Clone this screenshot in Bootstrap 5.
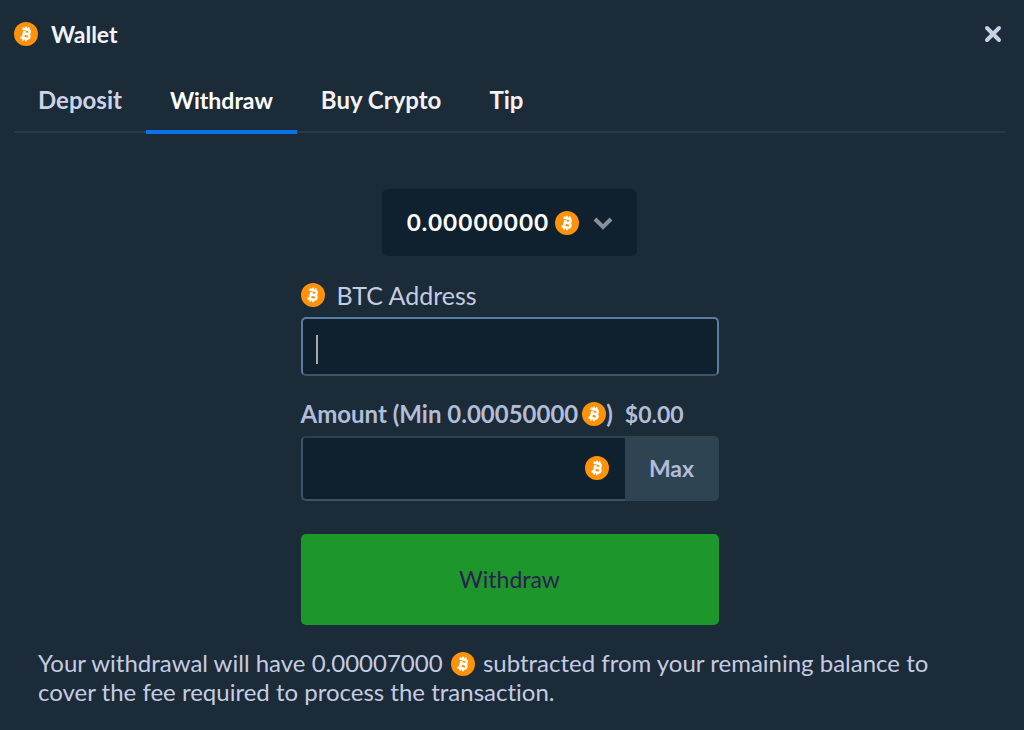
<!DOCTYPE html>
<html lang="en">
<head>
<meta charset="utf-8">
<meta name="viewport" content="width=device-width, initial-scale=1">
<title>Wallet</title>
<link href="https://cdn.jsdelivr.net/npm/bootstrap@5.3.0/dist/css/bootstrap.min.css" rel="stylesheet">
<style>
  body { background: #1b2b37; color: #c5cbe3; font-family: Lato, "Open Sans", sans-serif; font-size: 24px; line-height: 28px; font-variant-ligatures: none; }
  .wallet { padding: 20px 19px 20px 14px; }
  .coin { width: 24px; height: 24px; flex: none; }
  .wallet-title { font-size: 23px; line-height: 26px; color: #f1f3fb; gap: 13px; }
  .close-btn { width: 24px; height: 28px; line-height: 0; color: #c9cfe6; }
  .wallet-tabs { margin-top: 22px; border-bottom: 2px solid #243c4a; }
  .wallet-tabs .nav-link { padding: 16px 24px; margin-bottom: -3px; border: 0; border-bottom: 4px solid transparent; border-radius: 0; color: #f3f1f3; font-size: 24px; font-weight: 700; line-height: 28px; }
  .wallet-tabs .nav-link.muted-tab { color: #cdd3e8; }
  .wallet-tabs .nav-link.active { background: none; color: #fff; border-color: #0a72ea; font-size: 23px; }
  .wallet-form { max-width: 418px; }
  .balance-btn { margin-top: 56px; width: 255px; height: 67px; background: #0f202e; color: #fff; border: 0; border-radius: 6px; font-family: Inter, Lato, sans-serif; font-size: 23px; line-height: 28px; font-weight: 600; }
  .balance-btn:hover { background: #0f202e; color: #fff; }
  .balance-btn .coin { margin: 0 14px 0 6px; }
  .address-label { margin-top: 25px; margin-bottom: 8px; gap: 12px; font-size: 25px; }
  .wallet-input, .wallet-input:focus { background: #0f202e; color: #fff; border: 2px solid #3c5265; border-radius: 5px; box-shadow: none; }
  .address-input, .address-input:focus { height: 59px; border-color: #5b7ba1 #5b7ba1 #3f566a; }
  .text-caret { left: 15px; top: 18px; width: 2px; height: 29px; background: #a4a7b0; }
  .amount-label { margin-top: 24px; margin-bottom: 8px; font-weight: 700; color: #b3bdd8; }
  .amount-value { font-size: 23px; }
  .amount-input { height: 65px; padding-right: 48px; border-right: 0 !important; border-top-color: #2c4150 !important; }
  .amount-coin { right: 110px; top: 20px; z-index: 6; }
  .max-btn, .max-btn:hover { width: 94px; background: #2f4453; color: #b3bdd8; border: 0; border-radius: 5px; font-size: 23px; font-weight: 700; }
  .send-btn, .send-btn:hover { margin-top: 33px; height: 91px; background: #1d962b; color: #2a1f52; border: 0; border-radius: 5px; font-size: 23px; }
  .fee-note { margin: 23px 24px 0; line-height: 29px; }
  .fee-note .coin { vertical-align: -4px; margin: 0 2px; }
</style>
</head>
<body>
<svg class="d-none" aria-hidden="true">
  <symbol id="btc" viewBox="0 0 24 24">
    <circle cx="12" cy="12" r="12" fill="#ff9208"/>
    <g transform="rotate(13 12 12)" fill="none" stroke="#fff">
      <path d="M7.400 7.500H13a2.100 2.100 0 0 1 0 4.300H10M13 11.800h.6a2.300 2.300 0 0 1 0 4.700H7.400M9.800 7.500v9" stroke-width="2.500"/>
      <path d="M10.500 4.800v2M13.300 4.800v2M10.500 17v2.200M13.300 17v2.200" stroke-width="1.700"/>
    </g>
  </symbol>
</svg>
<main class="wallet">
  <header class="d-flex align-items-center justify-content-between">
    <h1 class="wallet-title d-flex align-items-center fw-bold mb-0"><svg class="coin"><use href="#btc"/></svg>Wallet</h1>
    <button type="button" class="close-btn btn p-0 border-0" aria-label="Close">
      <svg width="24" height="24" viewBox="0 0 24 24"><path d="M6 6l12 12M18 6l-12 12" stroke="currentColor" stroke-width="4" stroke-linecap="round"/></svg>
    </button>
  </header>

  <nav class="wallet-tabs nav nav-tabs">
    <a class="nav-link muted-tab" href="#deposit">Deposit</a>
    <a class="nav-link active" href="#withdraw" aria-current="page">Withdraw</a>
    <a class="nav-link" href="#buy">Buy Crypto</a>
    <a class="nav-link" href="#tip">Tip</a>
  </nav>

  <form class="wallet-form mx-auto" id="withdraw">
    <div class="text-center">
      <button type="button" class="balance-btn btn d-inline-flex align-items-center justify-content-center" aria-haspopup="listbox">
        <span>0.00000000</span>
        <svg class="coin"><use href="#btc"/></svg>
        <svg width="20" height="14" viewBox="0 0 20 14"><path d="M2 3l8 8 8-8" fill="none" stroke="#8b8f9b" stroke-width="4"/></svg>
      </button>
    </div>

    <label class="address-label d-flex align-items-center" for="address"><svg class="coin"><use href="#btc"/></svg>BTC Address</label>
    <div class="position-relative">
      <input type="text" class="wallet-input address-input form-control" id="address">
      <span class="text-caret position-absolute"></span>
    </div>

    <label class="amount-label d-flex align-items-center" for="amount">
      <span>Amount (Min 0.00050000</span><svg class="coin ms-1"><use href="#btc"/></svg><span>)</span><span class="amount-value ms-2 ps-1">$0.00</span>
    </label>
    <div class="input-group position-relative">
      <input type="text" class="wallet-input amount-input form-control" id="amount">
      <svg class="coin amount-coin position-absolute"><use href="#btc"/></svg>
      <button type="button" class="max-btn btn">Max</button>
    </div>

    <button type="submit" class="send-btn btn w-100">Withdraw</button>
  </form>

  <p class="fee-note">Your withdrawal will have 0.00007000 <svg class="coin"><use href="#btc"/></svg> subtracted from your remaining balance to cover the fee required to process the transaction.</p>
</main>
<script src="https://cdn.jsdelivr.net/npm/bootstrap@5.3.0/dist/js/bootstrap.bundle.min.js"></script>
</body>
</html>
